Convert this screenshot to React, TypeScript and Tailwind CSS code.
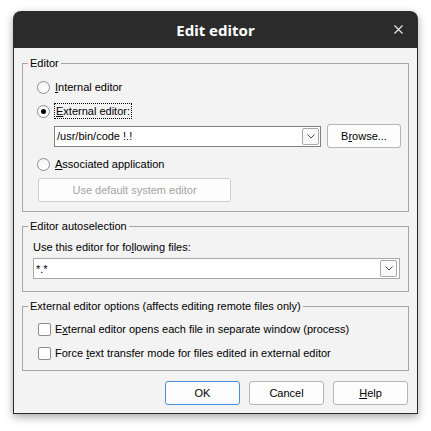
import type { ReactNode } from "react";

const ui = "font-['Liberation_Sans',Arial,sans-serif] text-[11px] leading-[14px] text-black";

function Key({ children }: { children: ReactNode }) {
  return <span className="underline underline-offset-[1px]">{children}</span>;
}

function Radio({ checked, children }: { checked?: boolean; children: ReactNode }) {
  return (
    <div className="flex items-center h-[16px] ml-[14px] gap-[5px]">
      <span className="w-[13px] h-[13px] rounded-full border border-[#8c8c8c] bg-gradient-to-b from-[#f4f4f4] to-white flex items-center justify-center">
        {checked && <span className="w-[5px] h-[5px] rounded-full bg-black" />}
      </span>
      {children}
    </div>
  );
}

function Check({ children }: { children: ReactNode }) {
  return (
    <div className="flex items-center h-[16px] ml-[15px] gap-[4px]">
      <span className="w-[13px] h-[13px] rounded-[2px] border border-[#8c8c8c] bg-white" />
      {children}
    </div>
  );
}

function DropArrow({ size = 17 }: { size?: number }) {
  return (
    <span
      className="border border-[#a8a8a8] rounded-[2px] bg-[#fafafa] flex items-center justify-center"
      style={{ width: size, height: size }}
    >
      <svg width="8" height="5" viewBox="0 0 8 5">
        <path d="M0.5 0.5 L4 4 L7.5 0.5" fill="none" stroke="#444" strokeWidth="1" />
      </svg>
    </span>
  );
}

function Group({ title, className, children }: { title: string; className?: string; children: ReactNode }) {
  return (
    <div className={`border border-[#a5a5a5] ${className ?? ""}`}>
      <div className="-mt-[8px] ml-[5px] px-[2px] w-fit bg-[#f3f3f3] h-[14px]">{title}</div>
      {children}
    </div>
  );
}

function Button({ children, primary, disabled, className }: { children: ReactNode; primary?: boolean; disabled?: boolean; className?: string }) {
  return (
    <div
      className={`flex items-center justify-center rounded-[3px] border bg-[#fdfdfd] ${
        primary ? "border-[#4a90d9]" : disabled ? "border-[#cfcfcf] text-[#a3a3a3]" : "border-[#b5b5b5]"
      } ${className ?? ""}`}
    >
      {children}
    </div>
  );
}

export default function App() {
  return (
    <div className="w-[431px] h-[431px] bg-white pt-[11px] pl-[13px]">
      <div className={`w-[405px] h-[403px] flex flex-col shadow-[0_3px_9px_rgba(0,0,0,0.35)] rounded-t-[8px] ${ui}`}>
        {/* title bar */}
        <div className="h-[37px] bg-[#2b2b2b] rounded-t-[8px] flex items-center relative">
          <span className="flex-1 text-center text-white font-['Noto_Sans',sans-serif] font-bold text-[15px] leading-[20px]">
            Edit editor
          </span>
          <svg className="absolute right-[15px] top-[14px]" width="9" height="9" viewBox="0 0 9 9">
            <path d="M0.5 0.5 L8.5 8.5 M8.5 0.5 L0.5 8.5" stroke="#e6e6e6" strokeWidth="1.2" />
          </svg>
        </div>

        {/* client area */}
        <div className="flex-1 bg-[#f3f3f3] border-x border-b border-[#2b2b2b] px-[8px] pt-[15px]">
          <Group title="Editor" className="pb-[9px]">
            <div className="mt-[9px]">
              <Radio>
                <span>
                  <Key>I</Key>nternal editor
                </span>
              </Radio>
            </div>
            <div className="mt-[8px]">
              <Radio checked>
                <span className="outline outline-1 outline-dotted outline-black px-[1px]">
                  <Key>E</Key>xternal editor:
                </span>
              </Radio>
            </div>
            <div className="mt-[5px] flex items-center ml-[31px] gap-[6px]">
              <div className="w-[267px] h-[21px] border border-[#7f7f7f] bg-white flex items-center pl-[2px] pr-[1px]">
                <span className="flex-1">/usr/bin/code !.!</span>
                <DropArrow />
              </div>
              <Button className="w-[74px] h-[24px]">
                <span>
                  B<Key>r</Key>owse...
                </span>
              </Button>
            </div>
            <div className="mt-[8px]">
              <Radio>
                <span>
                  <Key>A</Key>ssociated application
                </span>
              </Radio>
            </div>
            <Button disabled className="mt-[6px] ml-[15px] w-[193px] h-[24px]">
              Use default system editor
            </Button>
          </Group>

          <Group title="Editor autoselection" className="mt-[14px] pb-[12px]">
            <div className="mt-[7px] ml-[10px]">
              Use this editor for fo<Key>l</Key>lowing files:
            </div>
            <div className="mt-[4px] ml-[10px] w-[367px] h-[21px] border border-[#a8a8a8] bg-white flex items-center pl-[2px] pr-[2px]">
              <span className="flex-1">*.*</span>
              <DropArrow />
            </div>
          </Group>

          <Group title="External editor options (affects editing remote files only)" className="mt-[14px] pb-[9px]">
            <div className="mt-[8px]">
              <Check>
                <span>
                  E<Key>x</Key>ternal editor opens each file in separate window (process)
                </span>
              </Check>
            </div>
            <div className="mt-[8px]">
              <Check>
                <span>
                  Force <Key>t</Key>ext transfer mode for files edited in external editor
                </span>
              </Check>
            </div>
          </Group>

          <div className="mt-[10px] flex justify-end gap-[9px] pr-[1px]">
            <Button primary className="w-[75px] h-[24px]">
              OK
            </Button>
            <Button className="w-[75px] h-[24px]">Cancel</Button>
            <Button className="w-[75px] h-[24px]">
              <span>
                <Key>H</Key>elp
              </span>
            </Button>
          </div>
        </div>
      </div>
    </div>
  );
}
